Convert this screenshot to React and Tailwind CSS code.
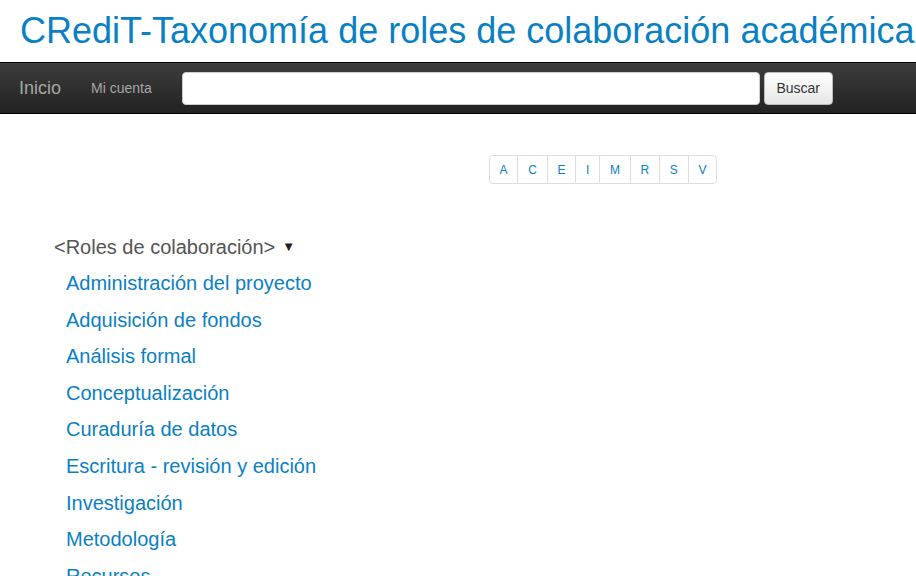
export default function App() {
  const letters = ["A", "C", "E", "I", "M", "R", "S", "V"];
  const items = [
    "Administración del proyecto",
    "Adquisición de fondos",
    "Análisis formal",
    "Conceptualización",
    "Curaduría de datos",
    "Escritura - revisión y edición",
    "Investigación",
    "Metodología",
    "Recursos",
    "Software",
  ];
  return (
    <div className="min-h-screen bg-white font-['Liberation_Sans',Arial,sans-serif]">
      <h1 className="h-[62px] pl-[20px] pt-[8px] text-[36px] leading-[46px] text-[#0a80c4] whitespace-nowrap overflow-hidden">
        CRediT-Taxonomía de roles de colaboración académica
      </h1>
      <nav className="h-[52px] border-y border-black bg-gradient-to-b from-[#3d3d3d] to-[#222222] flex items-center">
        <a className="ml-[19px] text-[18px] text-[#a6a6a6]">Inicio</a>
        <a className="ml-[30px] text-[14px] text-[#a6a6a6]">Mi cuenta</a>
        <div className="ml-[30px] w-[578px] h-[33px] rounded-[4px] bg-white border border-[#cccccc]"></div>
        <button className="ml-[4px] w-[69px] h-[33px] rounded-[4px] bg-gradient-to-b from-white to-[#e6e6e6] border border-[#bbbbbb] text-[14px] text-[#333333]">
          Buscar
        </button>
      </nav>
      <div className="flex justify-center pt-[41px] pl-[290px]">
        <div className="flex border border-[#dddddd] rounded-[4px] h-[29px]">
          {letters.map((l, i) => (
            <a
              key={l}
              className={
                "flex items-center justify-center px-[9.8px] text-[12px] text-[#0a80c4] " +
                (i > 0 ? "border-l border-[#dddddd]" : "")
              }
            >
              {l}
            </a>
          ))}
        </div>
      </div>
      <div className="pl-[54px] pt-[50px]">
        <div className="text-[20px] leading-[26px] text-[#555555] flex items-center">
          &lt;Roles de colaboración&gt;
          <span className="ml-[7px] text-[13px] text-[#222222]">▼</span>
        </div>
        <ul className="pl-[12px] pt-[5px]">
          {items.map((t) => (
            <li key={t} className="h-[36.6px] text-[20px] leading-[36px] text-[#0a80c4]">
              {t}
            </li>
          ))}
        </ul>
      </div>
    </div>
  );
}
